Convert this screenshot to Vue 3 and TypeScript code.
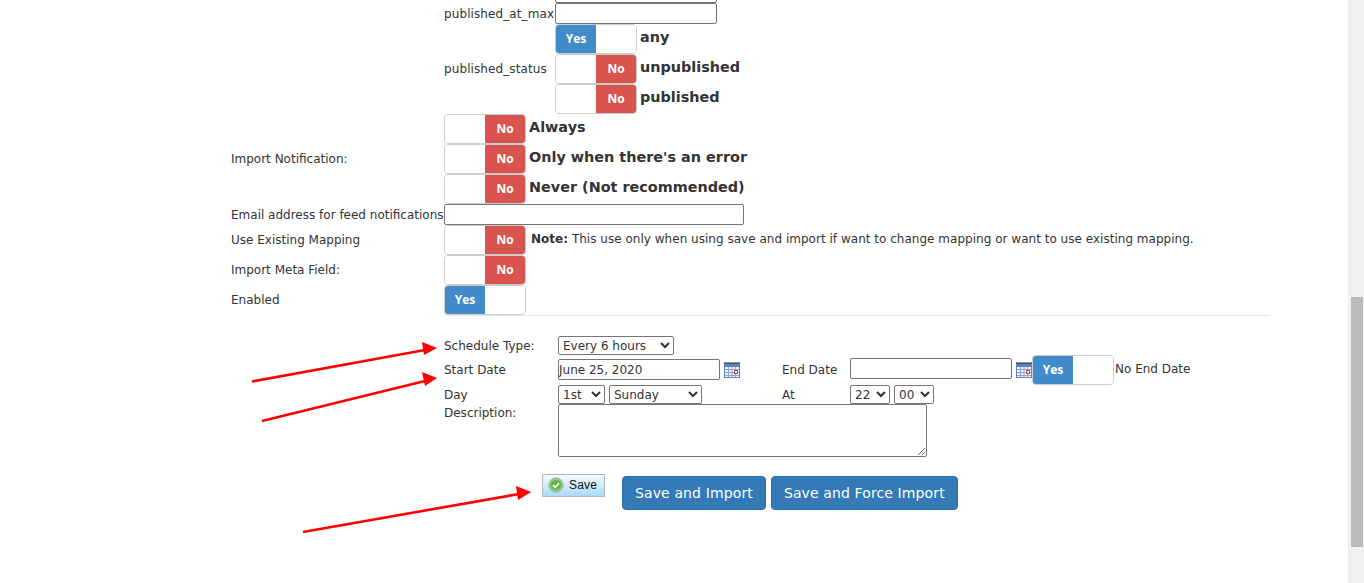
<script setup lang="ts">
interface Choice { text: string; on: boolean }

const statusChoices: Choice[] = [
  { text: 'any', on: true },
  { text: 'unpublished', on: false },
  { text: 'published', on: false },
]
const notifyChoices: Choice[] = [
  { text: 'Always', on: false },
  { text: "Only when there's an error", on: false },
  { text: 'Never (Not recommended)', on: false },
]
const arrows: [number, number, number, number][] = [
  [252, 381.5, 425, 350],
  [262, 421, 425, 381],
  [303, 532, 519, 494],
]
const heads: string[] = [
  '437,348 422,342 424,355',
  '437,378 422,372 425,386',
  '531,492 516,486 518,500',
]
</script>

<template>
  <div class="page">
    <main class="main">
      <div class="row-plain">
        <div class="label-col"></div>
        <div class="nested-row">
          <span class="nested-label"></span>
          <input class="input date-input" type="text" />
        </div>
      </div>
      <div class="row-plain">
        <div class="label-col"></div>
        <div class="nested-row">
          <span class="nested-label">published_at_max</span>
          <input class="input date-input" type="text" />
        </div>
      </div>
      <div class="row-plain">
        <div class="label-col"></div>
        <div class="nested-row">
          <span class="nested-label">published_status</span>
          <div class="stack">
            <div v-for="c in statusChoices" :key="c.text" class="choice">
              <div class="toggle" :class="{ 'toggle-on': c.on }">
                <span class="half" :class="c.on ? 'yes' : 'blank'">{{ c.on ? 'Yes' : '' }}</span>
                <span class="half" :class="c.on ? 'blank' : 'no'">{{ c.on ? '' : 'No' }}</span>
              </div>
              <b class="choice-text">{{ c.text }}</b>
            </div>
          </div>
        </div>
      </div>
      <div class="row-plain centered">
        <div class="label-col">Import Notification:</div>
        <div class="stack">
          <div v-for="c in notifyChoices" :key="c.text" class="choice">
            <div class="toggle">
              <span class="half blank"></span>
              <span class="half no">No</span>
            </div>
            <b class="choice-text">{{ c.text }}</b>
          </div>
        </div>
      </div>
      <div class="row-plain centered email-row">
        <div class="label-col">Email address for feed notifications</div>
        <input class="input email-input" type="text" />
      </div>
      <div class="row-plain centered">
        <div class="label-col">Use Existing Mapping</div>
        <div class="toggle">
          <span class="half blank"></span>
          <span class="half no">No</span>
        </div>
        <span class="note"><b>Note:</b> This use only when using save and import if want to change mapping or want to use existing mapping.</span>
      </div>
      <div class="row-plain centered">
        <div class="label-col">Import Meta Field:</div>
        <div class="toggle">
          <span class="half blank"></span>
          <span class="half no">No</span>
        </div>
      </div>
      <div class="row-plain centered">
        <div class="label-col">Enabled</div>
        <div class="toggle">
          <span class="half yes">Yes</span>
          <span class="half blank"></span>
        </div>
      </div>
      <div class="divider"></div>

      <div class="schedule">
        <span class="s-label">Schedule Type:</span>
        <div class="s-wide">
          <select class="select sel-type"><option>Every 6 hours</option></select>
        </div>

        <span class="s-label">Start Date</span>
        <div class="s-cell">
          <input class="input sched-date start-date" type="text" value="June 25, 2020" />
          <svg class="cal" width="16" height="16" viewBox="0 0 16 16">
            <rect x="0.5" y="1.5" width="15" height="14" fill="#eef3fc" stroke="#5f86c4" />
            <rect x="0" y="2" width="16" height="3" fill="#5b82bd" />
            <path d="M1 0v2M3 0v2M5 0v2M7 0v2M9 0v2M11 0v2M13 0v2M15 0v2" stroke="#222" stroke-width="1" />
            <path d="M1 7.5h14M1 10.5h14M1 13.5h14M4.5 5v10M8 5v10M11.5 5v10" stroke="#86a6d8" stroke-width="1" />
            <rect x="10.5" y="8.5" width="3" height="3" fill="#fff" stroke="#e0452c" />
          </svg>
        </div>
        <span class="s-label">End Date</span>
        <div class="s-cell">
          <input class="input sched-date end-date" type="text" />
          <svg class="cal" width="16" height="16" viewBox="0 0 16 16">
            <rect x="0.5" y="1.5" width="15" height="14" fill="#eef3fc" stroke="#5f86c4" />
            <rect x="0" y="2" width="16" height="3" fill="#5b82bd" />
            <path d="M1 0v2M3 0v2M5 0v2M7 0v2M9 0v2M11 0v2M13 0v2M15 0v2" stroke="#222" stroke-width="1" />
            <path d="M1 7.5h14M1 10.5h14M1 13.5h14M4.5 5v10M8 5v10M11.5 5v10" stroke="#86a6d8" stroke-width="1" />
            <rect x="10.5" y="8.5" width="3" height="3" fill="#fff" stroke="#e0452c" />
          </svg>
          <div class="toggle">
            <span class="half yes">Yes</span>
            <span class="half blank"></span>
          </div>
          <span class="no-end">No End Date</span>
        </div>

        <span class="s-label">Day</span>
        <div class="s-cell sel-gap">
          <select class="select sel-day"><option>1st</option></select>
          <select class="select sel-week"><option>Sunday</option></select>
        </div>
        <span class="s-label">At</span>
        <div class="s-cell sel-gap">
          <select class="select sel-hour"><option>22</option></select>
          <select class="select sel-hour"><option>00</option></select>
        </div>

        <span class="s-label desc">Description:</span>
        <div class="s-wide">
          <textarea class="area"></textarea>
        </div>
      </div>

      <div class="actions">
        <button class="save" type="button">
          <svg width="16" height="16" viewBox="0 0 16 16">
            <circle cx="8" cy="8" r="7.2" fill="#8ccb72" stroke="#aab8a6" stroke-width="1" />
            <circle cx="8" cy="8" r="5" fill="#62b348" />
            <path d="M5 8.2l2.2 2.2 3.8-4.4" fill="none" stroke="#fff" stroke-width="1.7" />
          </svg>
          <span>Save</span>
        </button>
        <button class="primary first" type="button">Save and Import</button>
        <button class="primary" type="button">Save and Force Import</button>
      </div>
    </main>

    <div class="scrollbar"><div class="thumb"></div></div>

    <svg class="arrows" width="1364" height="583" viewBox="0 0 1364 583">
      <line v-for="(a, i) in arrows" :key="i" :x1="a[0]" :y1="a[1]" :x2="a[2]" :y2="a[3]" stroke="#fe0000" stroke-width="2.6" />
      <polygon v-for="h in heads" :key="h" :points="h" fill="#fe0000" />
    </svg>
  </div>
</template>

<style>
html, body { margin: 0; background: #fff; overflow: hidden; }
</style>

<style scoped>
.page {
  position: relative;
  display: flex;
  height: 583px;
  width: 1364px;
  overflow: hidden;
  font-family: "DejaVu Sans", Verdana, sans-serif;
  font-size: 12px;
  color: #333;
  background: #fff;
}
.main {
  flex: 1;
  margin-top: -18px;
  padding-left: 231px;
  padding-right: 78px;
  min-width: 0;
}
.row-plain { display: flex; }
.centered { align-items: center; }
.label-col { width: 213px; flex: none; white-space: nowrap; }
.nested-row { display: flex; align-items: center; }
.nested-label { width: 111px; flex: none; white-space: nowrap; letter-spacing: 0.1px; }
.stack { display: flex; flex-direction: column; }
.choice { display: flex; align-items: flex-start; height: 30px; }
.choice-text { font-size: 14.4px; line-height: 26px; margin-left: 3px; white-space: nowrap; }
.input {
  box-sizing: border-box;
  height: 21px;
  border: 1px solid #767676;
  border-radius: 2px;
  padding: 1px;
  font: inherit;
  color: #333;
  background: #fff;
  outline: none;
}
.date-input { width: 162px; }
.email-row { height: 21px; }
.email-input { width: 300px; }
.toggle {
  box-sizing: border-box;
  display: flex;
  flex: none;
  width: 82px;
  height: 30px;
  border: 1px solid #ccc;
  border-radius: 4px;
  overflow: hidden;
  background: #fff;
}
.half {
  box-sizing: border-box;
  width: 40px;
  flex: none;
  display: flex;
  align-items: center;
  justify-content: center;
  padding-bottom: 1px;
  font-family: "Open Sans", sans-serif;
  font-weight: 700;
  color: #fff;
}
.yes { background: #428bca; }
.no { background: #d9534f; }
.blank { background: #fff; }
.note { margin-left: 5px; padding-bottom: 2px; white-space: nowrap; letter-spacing: 0.02px; }
.divider { height: 1px; margin: 0 0 0 213px; background: #e6e6e6; }
.schedule {
  display: grid;
  grid-template-columns: 114px 224px 68px auto;
  grid-template-rows: 19px 30px 19px 53px;
  margin: 20px 0 0 213px;
  align-items: center;
}
.s-label { white-space: nowrap; }
.s-cell { display: flex; align-items: center; }
.s-wide { grid-column: 2 / 5; }
.desc { align-self: start; padding-top: 2px; }
.sel-gap { gap: 4px; }
.select {
  box-sizing: border-box;
  height: 19px;
  font: inherit;
  color: #333;
  background: #fff;
  border: 1px solid #767676;
  border-radius: 2px;
}
.sel-type { width: 116px; }
.sel-day { width: 47px; }
.sel-week { width: 93px; }
.sel-hour { width: 40px; }
.sched-date { width: 162px; padding-left: 0; }
.start-date { margin-bottom: 1px; }
.end-date { margin-bottom: 3px; }
.cal { margin-left: 4px; flex: none; }
.no-end { margin-left: 1px; padding-bottom: 2px; white-space: nowrap; }
.area {
  display: block;
  box-sizing: border-box;
  width: 369px;
  height: 53px;
  border: 1px solid #767676;
  border-radius: 2px;
  font: inherit;
  outline: none;
}
.actions { display: flex; align-items: flex-start; margin: 17px 0 0 311px; }
.save {
  box-sizing: border-box;
  display: flex;
  align-items: center;
  gap: 5px;
  width: 63px;
  height: 23px;
  padding: 0 0 2px 5px;
  border: 1px solid #adb9c9;
  background: linear-gradient(#f6fbff, #a9daf8);
  font-family: "Liberation Sans", Arial, sans-serif;
  font-size: 12px;
  letter-spacing: 0.2px;
  color: #111;
}
.primary {
  box-sizing: border-box;
  height: 34px;
  margin: 2px 0 0 5px;
  padding: 0 12px;
  border: 1px solid #2e6da4;
  border-radius: 4px;
  background: #337ab7;
  color: #fff;
  font-family: inherit;
  font-size: 14px;
  letter-spacing: 0.12px;
}
.first { margin-left: 17px; }
.scrollbar {
  width: 16px;
  flex: none;
  height: 583px;
  background: #f1f1f1;
  border-left: 1px solid #ededed;
  box-sizing: border-box;
  padding: 297px 1px 0 2px;
}
.thumb { height: 250px; background: #bcbcbc; }
.arrows { position: absolute; left: 0; top: 0; pointer-events: none; }
</style>
